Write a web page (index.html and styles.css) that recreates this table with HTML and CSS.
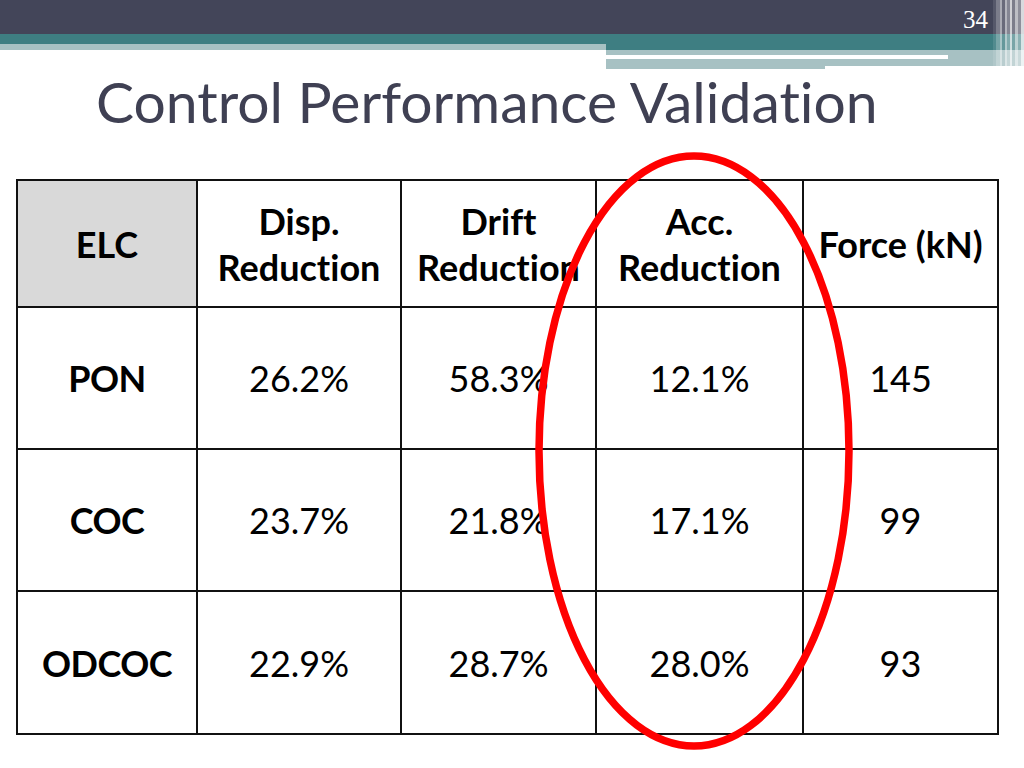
FILE: index.html
```html
<!DOCTYPE html>
<html lang="en">
<head>
<meta charset="utf-8">
<title>Control Performance Validation</title>
<link rel="stylesheet" href="styles.css">
</head>
<body>
<div class="slide">
  <header class="masthead">
    <div class="dark"><span class="page-num">34</span></div>
    <div class="bands">
      <div class="bands-left">
        <div class="teal teal-short"></div>
        <div class="light light-left"></div>
      </div>
      <div class="bands-right">
        <div class="teal teal-tall"></div>
        <div class="light light-thin"></div>
        <div class="rule-row"><div class="rule-white"></div><div class="rule-light"></div></div>
        <div class="light light-mid"></div>
        <div class="light light-tail"></div>
      </div>
    </div>
    <div class="stripes"></div>
  </header>

  <h1 class="title">Control Performance Validation</h1>

  <table class="results">
    <colgroup>
      <col class="c1"><col class="c2"><col class="c3"><col class="c4"><col class="c5">
    </colgroup>
    <tr class="head">
      <th class="shaded">ELC</th>
      <th>Disp.<br>Reduction</th>
      <th>Drift<br>Reduction</th>
      <th>Acc.<br>Reduction</th>
      <th>Force (kN)</th>
    </tr>
    <tr class="r1">
      <th>PON</th><td>26.2%</td><td>58.3%</td><td>12.1%</td><td>145</td>
    </tr>
    <tr class="r2">
      <th>COC</th><td>23.7%</td><td>21.8%</td><td>17.1%</td><td>99</td>
    </tr>
    <tr class="r3">
      <th>ODCOC</th><td>22.9%</td><td>28.7%</td><td>28.0%</td><td>93</td>
    </tr>
  </table>

  <svg class="highlight" width="1024" height="768" viewBox="0 0 1024 768" aria-hidden="true">
    <ellipse cx="694" cy="451" rx="155" ry="295" fill="none" stroke="#ff0000" stroke-width="7.5"/>
  </svg>
</div>
</body>
</html>
```

FILE: styles.css
```css
html, body {
  margin: 0;
  padding: 0;
  background: #ffffff;
}

.slide {
  position: relative;
  width: 1024px;
  height: 768px;
  overflow: hidden;
  background: #ffffff;
  font-family: Lato, "Open Sans", sans-serif;
  font-variant-ligatures: none;
  font-feature-settings: "liga" 0, "clig" 0;
}

/* ---------- masthead ---------- */
.masthead {
  position: relative;
  height: 70px;
}

.dark {
  height: 34px;
  background: #434559;
  display: flex;
  justify-content: flex-end;
  align-items: flex-end;
  padding-right: 36px;
  box-sizing: border-box;
}

.page-num {
  font-family: "Liberation Serif", "DejaVu Serif", serif;
  font-size: 25px;
  line-height: 25px;
  color: #ffffff;
  margin-bottom: 2px;
}

.bands {
  display: flex;
}

.bands-left {
  width: 606px;
}

.bands-right {
  flex: 1;
}

.teal {
  background: #3e7e82;
}

.light {
  background: #a7c1c3;
}

.teal-short { height: 10px; }
.light-left { height: 6px; }
.teal-tall { height: 16px; }
.light-thin { height: 5px; }
.light-mid { height: 7px; }
.light-tail { height: 3px; width: 219px; }

.rule-row {
  display: flex;
  height: 4px;
}

.rule-white {
  width: 342px;
  background: #ffffff;
}

.rule-light {
  flex: 1;
  background: #a7c1c3;
}

.stripes {
  position: absolute;
  top: 0;
  right: 0;
  width: 31px;
  height: 68px;
  background:
    linear-gradient(to right,
      rgba(255,255,255,0.10) 0px, rgba(255,255,255,0.10) 3px,
      rgba(255,255,255,0.30) 3px, rgba(255,255,255,0.30) 7px,
      rgba(255,255,255,0.55) 7px, rgba(255,255,255,0.55) 9px,
      rgba(255,255,255,0.20) 9px, rgba(255,255,255,0.20) 12px,
      rgba(255,255,255,0.60) 12px, rgba(255,255,255,0.60) 14px,
      rgba(255,255,255,0.35) 14px, rgba(255,255,255,0.35) 17px,
      rgba(255,255,255,0.75) 17px, rgba(255,255,255,0.75) 19px,
      rgba(255,255,255,0.30) 19px, rgba(255,255,255,0.30) 22px,
      rgba(255,255,255,0.65) 22px, rgba(255,255,255,0.65) 25px,
      rgba(255,255,255,0.40) 25px, rgba(255,255,255,0.40) 28px,
      rgba(255,255,255,0.80) 28px, rgba(255,255,255,0.80) 31px);
}

/* ---------- title ---------- */
.title {
  margin: 0;
  padding-left: 96px;
  font-family: Lato, "Open Sans", sans-serif;
  font-weight: 400;
  font-size: 57px;
  line-height: 62px;
  color: #3f4053;
}

/* ---------- table ---------- */
.results {
  margin: 47px 0 0 16px;
  width: 983px;
  table-layout: fixed;
  border-collapse: collapse;
  border: 2px solid #111111;
  color: #000000;
  font-family: Lato, "Open Sans", sans-serif;
  font-size: 36px;
}

.c1 { width: 180px; }
.c2 { width: 204px; }
.c3 { width: 195px; }
.c4 { width: 207px; }
.c5 { width: 195px; }

.results th,
.results td {
  border: 2px solid #111111;
  padding: 0;
  text-align: center;
  vertical-align: middle;
}

.results th {
  font-weight: 700;
  line-height: 46px;
}

.results tr:not(.head) th {
  letter-spacing: -0.5px;
}

.results td {
  font-weight: 400;
}

.results .shaded {
  background: #d9d9d9;
}

.head { height: 127px; }
.r1 { height: 142px; }
.r2 { height: 142px; }
.r3 { height: 143px; }

/* ---------- highlight ellipse ---------- */
.highlight {
  position: absolute;
  top: 0;
  left: 0;
  pointer-events: none;
}
```
